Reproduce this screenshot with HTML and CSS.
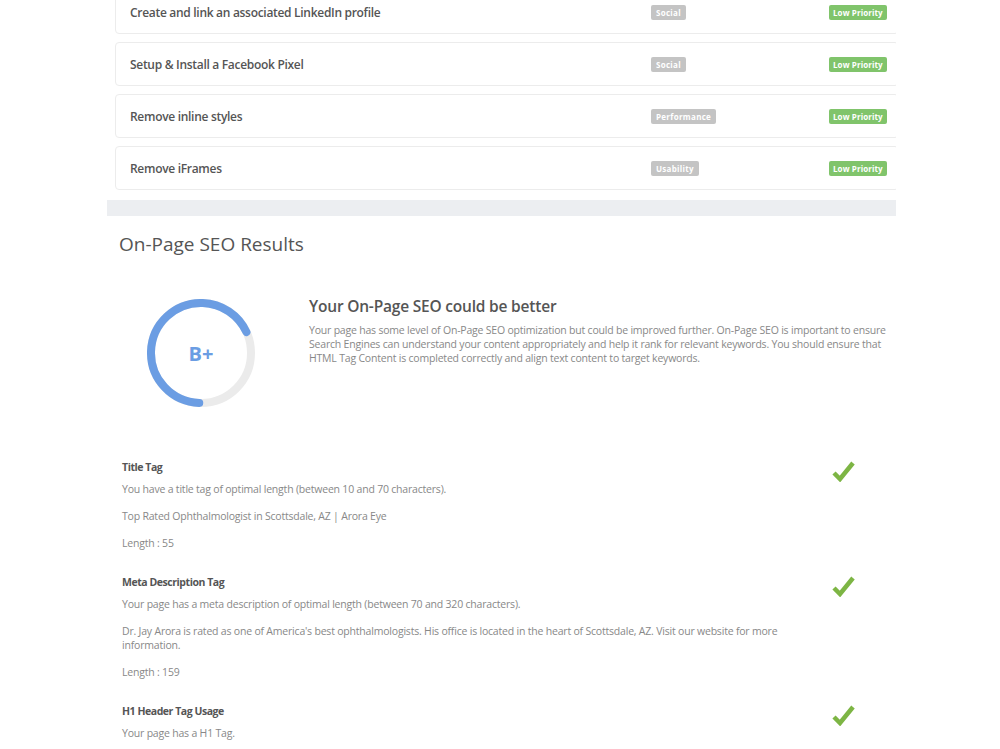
FILE: index.html
```html
<!DOCTYPE html>
<html lang="en">
<head>
    <meta charset="UTF-8">
    <meta name="viewport" content="width=device-width, initial-scale=1.0">
    <title>SEO Audit</title>
    <link rel="stylesheet" href="styles.css">
</head>
<body>
    <div class="report">
        <!-- recommendations list -->
        <div class="tasks">
            <div class="task">
                <div class="task-title">Create and link an associated LinkedIn profile</div>
                <div class="task-cell"><span class="tag">Social</span></div>
                <div class="task-cell"><span class="tag tag-low">Low Priority</span></div>
            </div>
            <div class="task">
                <div class="task-title">Setup &amp; Install a Facebook Pixel</div>
                <div class="task-cell"><span class="tag">Social</span></div>
                <div class="task-cell"><span class="tag tag-low">Low Priority</span></div>
            </div>
            <div class="task">
                <div class="task-title">Remove inline styles</div>
                <div class="task-cell"><span class="tag">Performance</span></div>
                <div class="task-cell"><span class="tag tag-low">Low Priority</span></div>
            </div>
            <div class="task">
                <div class="task-title">Remove iFrames</div>
                <div class="task-cell"><span class="tag">Usability</span></div>
                <div class="task-cell"><span class="tag tag-low">Low Priority</span></div>
            </div>
        </div>

        <div class="divider"></div>

        <!-- on-page results -->
        <h2 class="section-title">On-Page SEO Results</h2>

        <div class="summary">
            <div class="grade">
                <svg width="108" height="108" viewBox="0 0 108 108">
                    <circle cx="54" cy="54" r="50" fill="none" stroke="#ebebeb" stroke-width="8"/>
                    <circle cx="54" cy="54" r="50" fill="none" stroke="#6b9de3" stroke-width="8"
                            stroke-linecap="round" stroke-dasharray="212 314"
                            transform="rotate(92 54 54)"/>
                </svg>
                <span class="grade-letter">B+</span>
            </div>
            <div class="summary-text">
                <h3>Your On-Page SEO could be better</h3>
                <p>Your page has some level of On-Page SEO optimization but could be improved further. On-Page SEO is important to ensure Search Engines can understand your content appropriately and help it rank for relevant keywords. You should ensure that HTML Tag Content is completed correctly and align text content to target keywords.</p>
            </div>
        </div>

        <div class="checks">
            <div class="check-item">
                <div class="check-body">
                    <div class="check-title">Title Tag</div>
                    <p>You have a title tag of optimal length (between 10 and 70 characters).</p>
                    <p>Top Rated Ophthalmologist in Scottsdale, AZ | Arora Eye</p>
                    <p>Length : 55</p>
                </div>
                <svg class="tick" width="24" height="22" viewBox="0 0 24 22">
                    <path d="M3 13 L9 19 L22 3" fill="none" stroke="#7db544" stroke-width="4.5"/>
                </svg>
            </div>
            <div class="check-item">
                <div class="check-body">
                    <div class="check-title">Meta Description Tag</div>
                    <p>Your page has a meta description of optimal length (between 70 and 320 characters).</p>
                    <p>Dr. Jay Arora is rated as one of America's best ophthalmologists. His office is located in the heart of Scottsdale, AZ. Visit our website for more information.</p>
                    <p>Length : 159</p>
                </div>
                <svg class="tick" width="24" height="22" viewBox="0 0 24 22">
                    <path d="M3 13 L9 19 L22 3" fill="none" stroke="#7db544" stroke-width="4.5"/>
                </svg>
            </div>
            <div class="check-item">
                <div class="check-body">
                    <div class="check-title">H1 Header Tag Usage</div>
                    <p>Your page has a H1 Tag.</p>
                </div>
                <svg class="tick" width="24" height="22" viewBox="0 0 24 22">
                    <path d="M3 13 L9 19 L22 3" fill="none" stroke="#7db544" stroke-width="4.5"/>
                </svg>
            </div>
        </div>
    </div>
</body>
</html>
```

FILE: styles.css
```css
body {
    margin: 0;
    background-color: #fff;
    font-family: "Open Sans", "Noto Sans", sans-serif;
    color: #555;
    overflow: hidden;
}
.report {
    width: 789px;
    margin: 0 0 0 107px;
}

/* recommendation rows */
.tasks {
    margin-top: -10px;
    padding-left: 8px;
    display: flex;
    flex-direction: column;
    gap: 8px;
    overflow: hidden;
}
.task {
    height: 42px;
    margin-right: -3px;
    border: 1px solid #ececec;
    border-radius: 4px;
    display: grid;
    grid-template-columns: 1fr 178px 69px;
    align-items: center;
    padding-left: 14px;
}
.task-title {
    font-size: 12px;
    font-weight: 600;
    letter-spacing: -0.3px;
    color: #555;
}
.task-cell {
    display: flex;
    align-items: center;
}
.tag {
    display: inline-block;
    background-color: #c4c4c4;
    color: #fff;
    font-size: 8px;
    font-weight: 700;
    letter-spacing: 0.3px;
    line-height: 15px;
    padding: 0 5px;
    border-radius: 2px;
    white-space: nowrap;
}
.tag-low {
    background-color: #80c46b;
    letter-spacing: 0.1px;
    padding: 0 4px;
}

.divider {
    height: 16px;
    margin-top: 10px;
    background-color: #eceef1;
}

.section-title {
    margin: 14px 0 0 12px;
    font-size: 19px;
    font-weight: 400;
    line-height: 28px;
    color: #555;
}

/* grade summary */
.summary {
    display: flex;
    align-items: flex-start;
    gap: 54px;
    margin-top: 41px;
    padding: 0 8px 0 40px;
}
.grade {
    position: relative;
    width: 108px;
    height: 108px;
    flex-shrink: 0;
}
.grade svg {
    display: block;
}
.grade-letter {
    position: absolute;
    inset: 0;
    display: flex;
    align-items: center;
    justify-content: center;
    font-size: 20px;
    font-weight: 700;
    color: #6b9de3;
}
.summary-text h3 {
    margin: -7px 0 0;
    font-size: 15.5px;
    font-weight: 600;
    letter-spacing: -0.2px;
    line-height: 28px;
    color: #555;
}
.summary-text p {
    margin: 3px 0 0;
    font-size: 10.5px;
    letter-spacing: -0.2px;
    line-height: 14px;
    color: #888;
}

/* individual checks */
.checks {
    margin-top: 53px;
    padding-left: 15px;
}
.check-item {
    display: flex;
    align-items: flex-start;
    margin-bottom: 25px;
}
.check-body {
    flex: 1;
    padding-right: 12px;
}
.check-title {
    font-size: 10.5px;
    font-weight: 700;
    letter-spacing: -0.45px;
    line-height: 14px;
    color: #555;
}
.check-body p {
    margin: 8px 0 13px;
    font-size: 10.5px;
    letter-spacing: -0.2px;
    line-height: 14px;
    color: #888;
}
.check-body p:last-child {
    margin-bottom: 0;
}
.tick {
    flex-shrink: 0;
    margin-right: 41px;
}
```
